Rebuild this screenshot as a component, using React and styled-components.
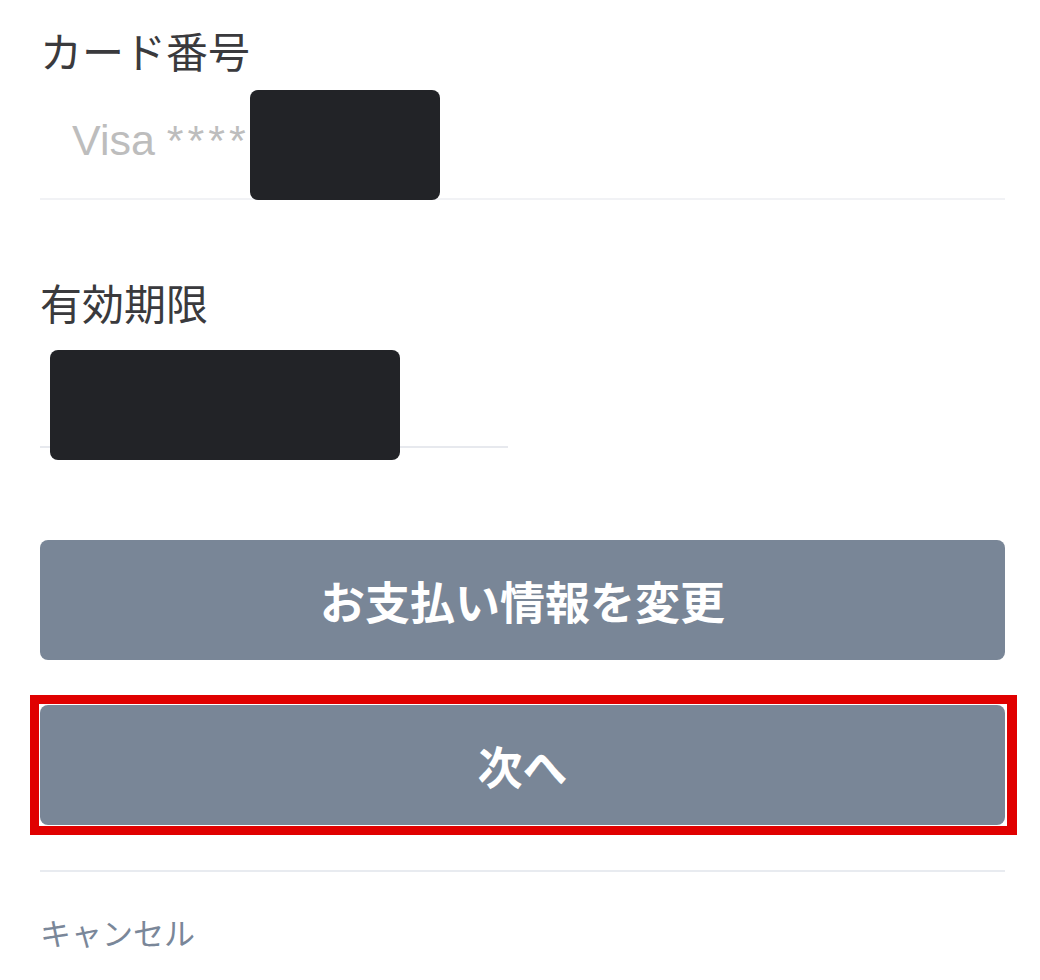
import styled, { createGlobalStyle } from "styled-components";

const GlobalStyle = createGlobalStyle`
  html, body {
    margin: 0;
    padding: 0;
    background: #fff;
  }

  body {
    font-family: "Noto Sans CJK JP", "Noto Sans", sans-serif;
  }
`;

const Page = styled.div`
  width: 1040px;
  height: 980px;
  box-sizing: border-box;
  padding: 26px 35px 0 40px;
  display: flex;
  flex-direction: column;
  overflow: hidden;
`;

const Section = styled.section`
  display: flex;
  flex-direction: column;
  margin-top: ${(p) => p.$gap || 0}px;
`;

const Label = styled.div`
  font-size: 42px;
  line-height: 48px;
  color: #3a3a3d;
`;

const Field = styled.div`
  display: flex;
  align-items: flex-start;
  box-sizing: border-box;
  height: ${(p) => p.$height}px;
  width: ${(p) => (p.$width ? `${p.$width}px` : "100%")};
  border-bottom: 2px solid ${(p) => p.$line};
`;

const MaskedValue = styled.div`
  margin: 41px 0 0 32px;
  font-family: "Liberation Sans", Arial, sans-serif;
  font-size: 43px;
  line-height: 50px;
  color: #bdbdbd;
  white-space: pre;

  & .stars {
    letter-spacing: 4px;
  }
`;

const Redact = styled.div`
  flex: none;
  width: ${(p) => p.$w}px;
  height: 110px;
  margin: ${(p) => p.$top}px 0 0 ${(p) => p.$left}px;
  border-radius: 8px;
  background: #222327;
`;

const Button = styled.button`
  display: flex;
  align-items: center;
  justify-content: center;
  width: 100%;
  height: 120px;
  margin: 0;
  padding: 0;
  border: none;
  border-radius: 8px;
  background: #798697;
  color: #fff;
  font-family: "Noto Sans CJK JP", "Noto Sans", sans-serif;
  font-size: 45px;
  font-weight: 700;
  cursor: pointer;
`;

const Highlight = styled.div`
  margin: 35px -12px 0 -10px;
  padding: 1px 2px 1px 1px;
  border: 9px solid #e00000;
  border-right-width: 10px;
`;

const Divider = styled.hr`
  margin: 35px 0 0;
  border: none;
  height: 2px;
  background: #e8ebf0;
`;

const CancelLink = styled.a`
  margin-top: 40px;
  font-size: 31px;
  line-height: 40px;
  color: #7a8799;
  text-decoration: none;
  cursor: pointer;
`;

export default function App() {
  return (
    <>
      <GlobalStyle />
      <Page>
        <Section>
          <Label>カード番号</Label>
          <Field $height={126} $line="#f1f2f5">
            <MaskedValue>
              {"Visa "}
              <span className="stars">****</span>
            </MaskedValue>
            <Redact $w={190} $top={16} $left={0} />
          </Field>
        </Section>

        <Section $gap={78}>
          <Label>有効期限</Label>
          <Field $height={122} $width={468} $line="#e7e9ee">
            <Redact $w={350} $top={24} $left={10} />
          </Field>
        </Section>

        <Section $gap={92}>
          <Button type="button">お支払い情報を変更</Button>
          <Highlight>
            <Button type="button">次へ</Button>
          </Highlight>
        </Section>

        <Divider />
        <CancelLink>キャンセル</CancelLink>
      </Page>
    </>
  );
}
